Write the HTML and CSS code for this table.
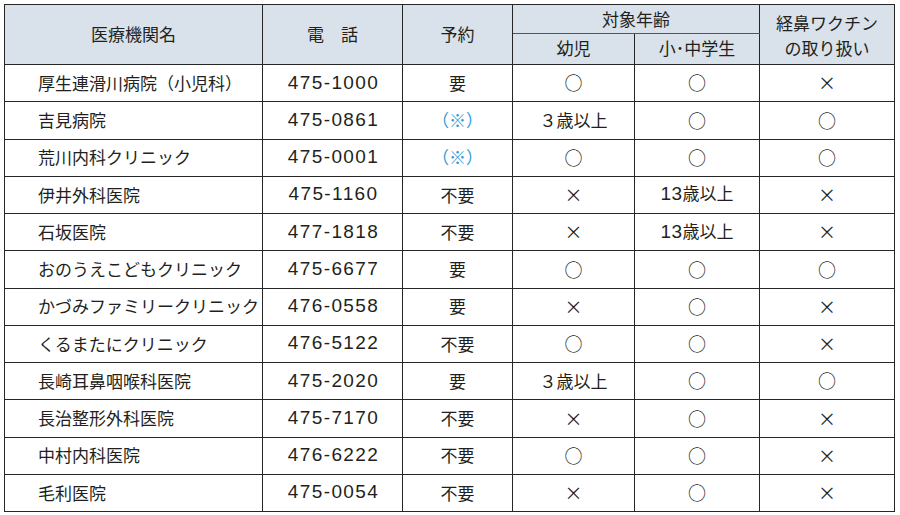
FILE: index.html
```html
<!DOCTYPE html>
<html lang="ja">
<head>
<meta charset="utf-8">
<link rel="stylesheet" href="styles.css">
</head>
<body>
<table class="clinics">
  <colgroup>
    <col class="c-name"><col class="c-tel"><col class="c-rsv"><col class="c-inf"><col class="c-sch"><col class="c-vac">
  </colgroup>
  <thead>
    <tr class="h1">
      <th rowspan="2">医療機関名</th>
      <th rowspan="2">電　話</th>
      <th rowspan="2">予約</th>
      <th colspan="2">対象年齢</th>
      <th rowspan="2" class="two">経鼻ワクチン<br>の取り扱い</th>
    </tr>
    <tr class="h2">
      <th>幼児</th>
      <th>小･中学生</th>
    </tr>
  </thead>
  <tbody>
    <tr><td class="name">厚生連滑川病院（小児科）</td><td class="tel">475-1000</td><td>要</td><td class="mk">○</td><td class="mk">○</td><td class="mk">×</td></tr>
    <tr><td class="name">吉見病院</td><td class="tel">475-0861</td><td class="note">（※）</td><td>３歳以上</td><td class="mk">○</td><td class="mk">○</td></tr>
    <tr><td class="name">荒川内科クリニック</td><td class="tel">475-0001</td><td class="note">（※）</td><td class="mk">○</td><td class="mk">○</td><td class="mk">○</td></tr>
    <tr><td class="name">伊井外科医院</td><td class="tel">475-1160</td><td>不要</td><td class="mk">×</td><td><span class="num">13</span>歳以上</td><td class="mk">×</td></tr>
    <tr><td class="name">石坂医院</td><td class="tel">477-1818</td><td>不要</td><td class="mk">×</td><td><span class="num">13</span>歳以上</td><td class="mk">×</td></tr>
    <tr><td class="name">おのうえこどもクリニック</td><td class="tel">475-6677</td><td>要</td><td class="mk">○</td><td class="mk">○</td><td class="mk">○</td></tr>
    <tr><td class="name">かづみファミリークリニック</td><td class="tel">476-0558</td><td>要</td><td class="mk">×</td><td class="mk">○</td><td class="mk">×</td></tr>
    <tr><td class="name">くるまたにクリニック</td><td class="tel">476-5122</td><td>不要</td><td class="mk">○</td><td class="mk">○</td><td class="mk">×</td></tr>
    <tr><td class="name">長崎耳鼻咽喉科医院</td><td class="tel">475-2020</td><td>要</td><td>３歳以上</td><td class="mk">○</td><td class="mk">○</td></tr>
    <tr><td class="name">長治整形外科医院</td><td class="tel">475-7170</td><td>不要</td><td class="mk">×</td><td class="mk">○</td><td class="mk">×</td></tr>
    <tr><td class="name">中村内科医院</td><td class="tel">476-6222</td><td>不要</td><td class="mk">○</td><td class="mk">○</td><td class="mk">×</td></tr>
    <tr><td class="name">毛利医院</td><td class="tel">475-0054</td><td>不要</td><td class="mk">×</td><td class="mk">○</td><td class="mk">×</td></tr>
  </tbody>
</table>
</body>
</html>
```

FILE: styles.css
```css
html, body {
  margin: 0;
  padding: 0;
  background: #ffffff;
}
body {
  padding: 4px 0 0 4px;
  font-family: "Noto Sans CJK JP", "Noto Sans", sans-serif;
  color: #231f20;
}
.clinics {
  border-collapse: collapse;
  table-layout: fixed;
  width: 890px;
  border: 1.5px solid #262626;
}
.c-name { width: 258px; }
.c-tel { width: 140px; }
.c-rsv { width: 110px; }
.c-inf { width: 122px; }
.c-sch { width: 125px; }
.c-vac { width: 135px; }

.clinics th, .clinics td {
  border: 1px solid #262626;
  padding: 0;
  text-align: center;
  vertical-align: middle;
  font-size: 17px;
  font-weight: 400;
  line-height: 1.2;
}
.clinics th {
  background: #d9e2ea;
}
.h1 th { height: 28px; }
.h2 th { height: 29px; padding-bottom: 1px; }
.h1 th[colspan] { border-bottom-color: #555; }
.clinics th.two {
  line-height: 25px;
}
.clinics tbody tr { height: 37.25px; }
.clinics td.name {
  text-align: left;
  padding-left: 33px;
}
.clinics td.tel {
  font-family: "Liberation Sans", "Noto Sans", sans-serif;
  font-size: 19px;
  letter-spacing: 1.4px;
  padding-left: 2px;
}
.num {
  font-family: "Liberation Sans", "Noto Sans", sans-serif;
  font-size: 19px;
  letter-spacing: 0.5px;
}
.clinics td.note {
  color: #2e9ad6;
}
.clinics td.mk {
  font-size: 18px;
}
```
